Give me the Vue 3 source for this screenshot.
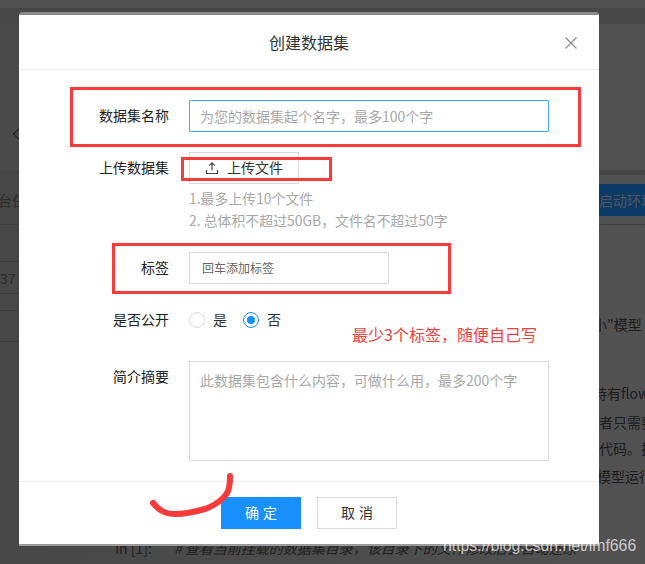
<script setup>
import { ref } from 'vue'

const name = ref('')
const desc = ref('')
const isPublic = ref(false)
const tips = ['1.最多上传10个文件', '2. 总体积不超过50GB，文件名不超过50字']
// 右边露出来的正文，top 是相对这一列的行高，left 是行首缩进
const pageLines = [
  { text: '小"模型', h: 30, top: 0, left: 3 },
  { text: '持有flow', h: 28, top: 39, left: 3 },
  { text: '者只需要', h: 28, top: 1, left: 9 },
  { text: '代码。技', h: 28, top: -2, left: 9 },
  { text: '模型运行', h: 28, top: 0, left: 7 },
]
</script>

<template>
  <div class="page">
    <!-- 遮罩后面的页面 -->
    <div class="bg">
      <div class="band-a"></div>
      <div class="band-b"></div>
      <div class="band-c"><span class="back"></span></div>
      <div class="band-d"></div>
      <div class="row-head">
        <span class="dim-text">台任</span>
        <span class="start-btn">启动环境</span>
      </div>
      <div class="cols">
        <div class="col-left">
          <div class="row-plain r1"></div>
          <div class="row-num"><span class="dim-text num">37</span></div>
          <div class="row-plain r2"></div>
          <div class="row-plain r3"></div>
        </div>
        <div class="col-right">
          <div
            v-for="l in pageLines"
            :key="l.text"
            class="page-line"
            :style="{ height: l.h + 'px', marginTop: l.top + 'px', paddingLeft: l.left + 'px' }"
          >{{ l.text }}</div>
        </div>
      </div>
      <div class="code-line">
        <span class="code-in">In [1]:</span>
        <span class="code-comment"># 查看当前挂载的数据集目录，该目录下的文件修改后会自动还原</span>
      </div>
    </div>

    <!-- 弹窗 -->
    <div class="dialog">
      <div class="dialog-head">
        <span class="dialog-title">创建数据集</span>
        <svg class="close" width="14" height="14" viewBox="0 0 14 14">
          <path d="M1.5 1.5 L12.5 12.5 M12.5 1.5 L1.5 12.5" stroke="#8c8c8c" stroke-width="1.3" fill="none" />
        </svg>
      </div>
      <div class="dialog-body">
        <div class="form-row first">
          <label class="form-label">数据集名称</label>
          <input v-model="name" class="input focus" placeholder="为您的数据集起个名字，最多100个字" />
        </div>
        <div class="form-row upload-row">
          <label class="form-label">上传数据集</label>
          <div>
            <div class="upload-btn">
              <svg width="14" height="14" viewBox="0 0 14 14">
                <path d="M7 9.5 V2 M4.2 4.6 L7 1.8 L9.8 4.6 M1.5 9 V12.5 H12.5 V9" stroke="#444" stroke-width="1.2" fill="none" />
              </svg>
              <span class="upload-text">上传文件</span>
            </div>
            <div class="tips">
              <div v-for="t in tips" :key="t">{{ t }}</div>
            </div>
          </div>
        </div>
        <div class="form-row tag-row">
          <label class="form-label">标签</label>
          <div class="tag-input">回车添加标签</div>
        </div>
        <div class="form-row radio-row">
          <label class="form-label">是否公开</label>
          <div class="radio-group">
            <span class="radio" :class="{ on: isPublic }" @click="isPublic = true"></span>
            <span class="radio-text">是</span>
            <span class="radio second" :class="{ on: !isPublic }" @click="isPublic = false"></span>
            <span class="radio-text">否</span>
          </div>
        </div>
        <div class="form-row area-row">
          <label class="form-label">简介摘要</label>
          <textarea v-model="desc" class="textarea" placeholder="此数据集包含什么内容，可做什么用，最多200个字"></textarea>
        </div>
      </div>
      <div class="dialog-foot">
        <button class="btn primary">确 定</button>
        <button class="btn">取 消</button>
      </div>
    </div>

    <!-- 截图上的手工标注 -->
    <div class="mark m1"></div>
    <div class="mark m2"></div>
    <div class="mark m3"></div>
    <div class="mark-note">最少3个标签，随便自己写</div>
    <svg class="scribble" width="100" height="60" viewBox="0 0 100 60">
      <path d="M4 30 C9 36 14 41 27 41 C36 41 45 39 56 36 C64 33 70 29 74 25 C78 21 81 18 81 3" stroke="#f73b3b" stroke-width="6" stroke-linecap="round" fill="none" />
    </svg>
    <div class="watermark">https://blog.csdn.net/lmf666</div>
  </div>
</template>

<style>
html, body {
  margin: 0;
  background: #4b4b4b;
}
</style>

<style scoped>
.page {
  position: relative;
  width: 645px;
  height: 564px;
  overflow: hidden;
  font-family: "Noto Sans CJK SC", "Liberation Sans", sans-serif;
  font-size: 14px;
  color: #333;
}
.bg {
  height: 564px;
  background: linear-gradient(90deg, #474747, #525252);
  color: #1f1f1f;
}
.band-a { height: 8px; background: #525252; }
.band-b { height: 16px; background: #474747; }
.band-c {
  height: 146px;
  position: relative;
  background: linear-gradient(90deg, #4a4a4a, #515151);
}
.back {
  position: absolute;
  left: 15px;
  top: 105px;
  width: 9px;
  height: 9px;
  border-left: 1px solid #222;
  border-bottom: 1px solid #222;
  transform: rotate(45deg);
}
.band-d { height: 5px; background: #464646; }
.row-head {
  height: 50px;
  padding-top: 9px;
  box-sizing: border-box;
  display: flex;
  justify-content: space-between;
  align-items: flex-start;
  border-bottom: 1px solid #3e3e3e;
}
.dim-text {
  font-size: 14px;
  line-height: 32px;
  color: #2c2c2c;
  margin-left: -2px;
}
.dim-text.num { margin-left: 0; }
.start-btn {
  width: 46px;
  height: 32px;
  line-height: 32px;
  white-space: nowrap;
  overflow: hidden;
  background: #0c3a66;
  color: #555;
  box-sizing: border-box;
}
.cols {
  display: flex;
  justify-content: space-between;
  height: 313px;
}
.col-left { width: 60px; }
.col-right {
  width: 55px;
  padding-top: 85px;
  box-sizing: border-box;
}
.row-plain { border-bottom: 1px solid #3e3e3e; }
.r1 { height: 36px; }
.row-num {
  height: 31px;
  line-height: 32px;
  border-bottom: 1px solid #3e3e3e;
}
.r2 { height: 16px; }
.r3 { height: 30px; }
.page-line {
  white-space: nowrap;
  overflow: hidden;
  color: #1c1c1c;
  line-height: 28px;
  font-size: 14px;
}
.code-line {
  display: flex;
  padding-left: 115px;
  gap: 22px;
  font-size: 14px;
  line-height: 20px;
  color: #1f1f1f;
  white-space: nowrap;
}
.code-comment { font-style: italic; }

.dialog {
  position: absolute;
  left: 19px;
  top: 12px;
  width: 580px;
  height: 534px;
  box-sizing: border-box;
  background: #fff;
  border-top: 3px solid #8a8a8a;
  border-bottom: 2px solid #9a9a9a;
  border-radius: 3px 3px 0 0;
  display: flex;
  flex-direction: column;
}
.dialog-head {
  height: 55px;
  flex: none;
  display: flex;
  align-items: center;
  justify-content: center;
  position: relative;
  border-bottom: 1px solid #ececec;
  box-sizing: border-box;
}
.dialog-title {
  font-size: 16px;
  color: #333;
}
.close {
  position: absolute;
  right: 21px;
  top: 21px;
}
.dialog-body {
  flex: 1;
  padding-top: 30px;
}
.form-row { display: flex; }
.form-label {
  width: 150px;
  margin-right: 20px;
  text-align: right;
  color: #222;
  line-height: 30px;
  flex: none;
}
.input {
  width: 360px;
  height: 32px;
  box-sizing: border-box;
  padding: 0 10px;
  border: 1px solid #d9d9d9;
  outline: none;
  font: inherit;
  border-radius: 1px;
}
.input.focus { border-color: #40a9ff; }
.input::placeholder, .textarea::placeholder { color: #a8a8a8; }
.upload-row { margin-top: 20px; }
.upload-btn {
  width: 110px;
  height: 32px;
  box-sizing: border-box;
  border: 1px solid #d9d9d9;
  display: flex;
  align-items: center;
  justify-content: center;
  gap: 8px;
  color: #333;
}
.upload-text { margin-bottom: 2px; }
.tips {
  margin-top: 3px;
  line-height: 22px;
  color: #a8a8a8;
  font-size: 13.9px;
}
.tag-row { margin-top: 21px; }
.tag-input {
  width: 200px;
  height: 32px;
  box-sizing: border-box;
  border: 1px solid #d9d9d9;
  padding-left: 12px;
  line-height: 29px;
  font-size: 12px;
  color: #666;
}
.radio-row { margin-top: 20px; }
.radio-group {
  display: flex;
  align-items: center;
  height: 32px;
}
.radio {
  width: 16px;
  height: 16px;
  box-sizing: border-box;
  border: 1px solid #d9d9d9;
  border-radius: 50%;
  position: relative;
}
.radio.on { border-color: #1890ff; }
.radio.on::after {
  content: "";
  position: absolute;
  left: 3px;
  top: 3px;
  width: 8px;
  height: 8px;
  border-radius: 50%;
  background: #1890ff;
}
.radio.second { margin-left: 16px; }
.radio-text { margin-left: 8px; margin-bottom: 2px; color: #333; }
.area-row { margin-top: 25px; }
.textarea {
  width: 360px;
  height: 100px;
  box-sizing: border-box;
  padding: 8px 10px;
  border: 1px solid #d9d9d9;
  outline: none;
  resize: none;
  font: inherit;
  display: block;
}
.dialog-foot {
  height: 63px;
  flex: none;
  border-top: 1px solid #ececec;
  box-sizing: border-box;
  padding-top: 15px;
  padding-left: 202px;
  display: flex;
  gap: 16px;
}
.btn {
  width: 80px;
  height: 32px;
  box-sizing: border-box;
  border: 1px solid #d9d9d9;
  background: #fff;
  font: inherit;
  word-spacing: 1px;
  color: #333;
  padding: 0 0 2px;
}
.btn.primary {
  background: #1890ff;
  border-color: #1890ff;
  color: #fff;
}

.mark {
  position: absolute;
  border: 3px solid #fb3a3a;
  box-sizing: border-box;
}
.m1 { left: 70px; top: 87px; width: 511px; height: 60px; }
.m2 { left: 181px; top: 157px; width: 151px; height: 24px; }
.m3 { left: 112px; top: 243px; width: 339px; height: 51px; }
.mark-note {
  position: absolute;
  left: 352px;
  top: 322px;
  font-size: 16px;
  line-height: 24px;
  color: #f44040;
  white-space: nowrap;
}
.scribble {
  position: absolute;
  left: 149px;
  top: 473px;
}
.watermark {
  position: absolute;
  left: 443px;
  top: 534px;
  font-family: "Liberation Sans", sans-serif;
  font-size: 15.8px;
  line-height: 24px;
  color: rgba(255, 255, 255, 0.7);
  white-space: nowrap;
}
</style>
